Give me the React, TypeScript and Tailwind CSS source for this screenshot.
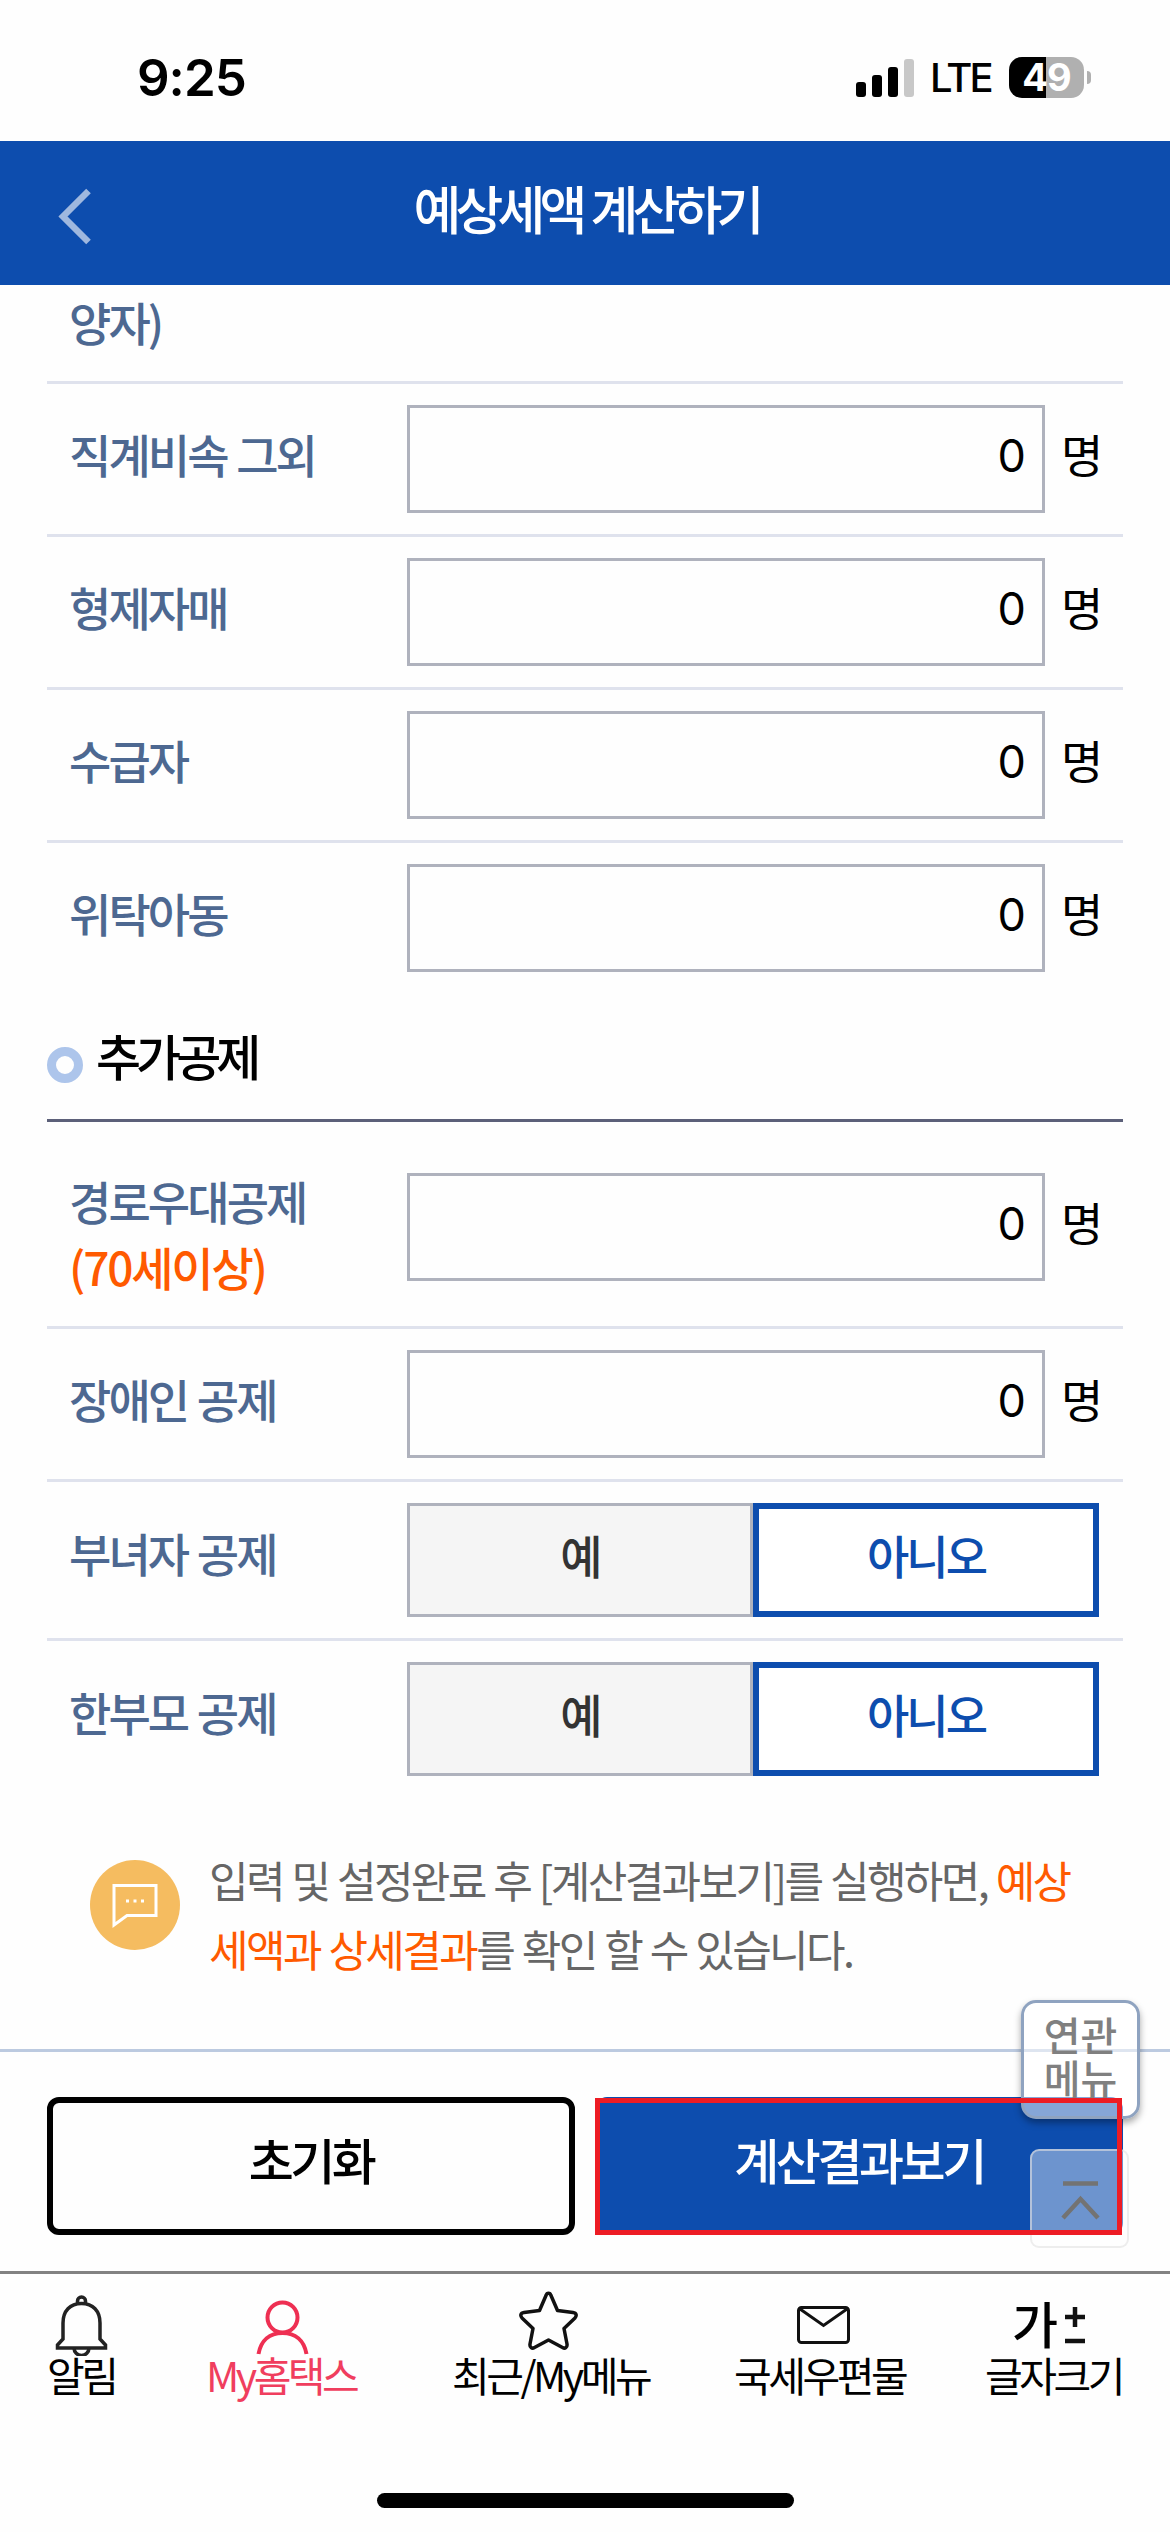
import { useState } from 'react';

interface CountField {
  label: string;
  note?: string;
}

const familyFields: CountField[] = [
  { label: '직계비속 그외' },
  { label: '형제자매' },
  { label: '수급자' },
  { label: '위탁아동' },
];

const extraFields: CountField[] = [
  { label: '경로우대공제', note: '(70세이상)' },
  { label: '장애인 공제' },
];

const choiceFields = ['부녀자 공제', '한부모 공제'];

function StatusBar() {
  return (
    <div className="h-[141px] flex items-start justify-between pl-[137px] pr-[79px] pt-[57px] text-black font-['Inter']">
      <span className="text-[51px] leading-[42px] font-semibold tracking-[-1px]">9:25</span>
      <div className="flex items-center h-[41px]">
        <svg width="58" height="38" viewBox="0 0 58 38">
          <rect x="0" y="23" width="10" height="15" rx="3" />
          <rect x="16" y="16" width="10" height="22" rx="3" />
          <rect x="32" y="8" width="10" height="30" rx="3" />
          <rect x="48" y="0" width="10" height="38" rx="3" fill="#c8c8c8" />
        </svg>
        <span className="ml-[16px] w-[63px] text-[40px] leading-[41px] font-medium tracking-[-2.700px]">LTE</span>
        <div className="ml-[16px] flex h-[41px] w-[75px] items-center justify-center rounded-[13px] bg-[linear-gradient(90deg,#000_49%,#b0b0b0_49%)] text-[38px] leading-[41px] font-bold tracking-[-1px] text-white">
          49
        </div>
        <div className="ml-[3px] h-[13px] w-[4px] rounded-r-full bg-[#b0b0b0]" />
      </div>
    </div>
  );
}

function Header() {
  return (
    <header className="relative flex h-[144px] items-center justify-center bg-[#0d4dae]">
      <button type="button" aria-label="뒤로" className="absolute left-[58px] top-[47px]">
        <svg width="34" height="57" viewBox="0 0 34 57" fill="none" stroke="#9fb8df" strokeWidth="6.500">
          <path d="M30.500 3L5 28.500L30.500 54" />
        </svg>
      </button>
      <h1 className="pb-[10px] pl-[2px] text-[52px] leading-[70px] font-medium tracking-[-5.800px] [word-spacing:3px] text-white">예상세액 계산하기</h1>
    </header>
  );
}

function Label({ field }: { field: CountField }) {
  return (
    <div className="w-[360px] pl-[22px] text-[46px] leading-[66px] font-medium tracking-[-2.900px] [word-spacing:2px] text-[#4d6891]">
      {field.label}
      {field.note && <div className="tracking-[-2.200px] text-[#ff5a00]">{field.note}</div>}
    </div>
  );
}

function CountRow({ field, last }: { field: CountField; last?: boolean }) {
  return (
    <div className={`flex items-center ${last ? '' : 'border-b-[3px] border-[#dfe2ed]'} ${field.note ? 'h-[207px] pt-[6px]' : last ? 'h-[150px]' : 'h-[153px]'}`}>
      <div className={field.note ? 'pt-[12px]' : 'pb-[12px]'}>
        <Label field={field} />
      </div>
      <div className="flex h-[108px] w-[638px] items-center justify-end border-[3px] border-[#afb2bd] pr-[16px] pb-[6px] font-['Inter',sans-serif] text-[45px] text-black">
        0
      </div>
      <span className="ml-[16px] pb-[12px] text-[46px] leading-[66px] text-black">명</span>
    </div>
  );
}

function ChoiceRow({ label, last }: { label: string; last?: boolean }) {
  const [value, setValue] = useState('no');
  const on = 'border-[6px] border-[#0d4dae] bg-white text-[#0d4dae]';
  const off = 'border-[3px] border-[#afb2bd] bg-[#f5f5f5] text-[#333]';

  return (
    <div className={`flex items-center ${last ? 'h-[156px]' : 'h-[159px] border-b-[3px] border-[#dfe2ed]'}`}>
      <div className="pb-[17px]">
        <Label field={{ label }} />
      </div>
      <button
        type="button"
        onClick={() => setValue('yes')}
        className={`h-[114px] w-[346px] pb-[11px] text-[46px] font-medium tracking-[-3px] ${value === 'yes' ? on : off}`}
      >
        예
      </button>
      <button
        type="button"
        onClick={() => setValue('no')}
        className={`h-[114px] w-[346px] pb-[11px] text-[46px] font-medium tracking-[-3px] ${value === 'no' ? on : off}`}
      >
        아니오
      </button>
    </div>
  );
}

function Notice() {
  return (
    <div className="flex h-[252px] pt-[48px] pl-[90px]">
      <div className="mt-[15px] h-[90px] w-[90px] shrink-0 rounded-full bg-[#f5bc60]">
        <svg width="90" height="90" viewBox="0 0 90 90" fill="none" stroke="#fff" strokeWidth="3">
          <path d="M24 25.500H66V55.500H37L24 65Z" />
          <path d="M36 41h3M43.500 41h3M51 41h3" />
        </svg>
      </div>
      <p className="ml-[29px] whitespace-nowrap text-[43px] leading-[69px] tracking-[-2.600px] [word-spacing:1.500px] text-[#666]">
        입력 및 설정완료 후 [계산결과보기]를 실행하면, <span className="text-[#ff5a00]">예상</span>
        <br />
        <span className="text-[#ff5a00]">세액과 상세결과</span>를 확인 할 수 있습니다.
      </p>
    </div>
  );
}

function BottomActions() {
  return (
    <div className="relative flex h-[222px] gap-[20px] border-t-[3px] border-[#bccae0] px-[47px] pt-[45px]">
      <button type="button" className="h-[138px] w-[528px] rounded-[12px] border-[6px] border-black pb-[15px] text-[49px] font-medium tracking-[-3.500px] text-black">
        초기화
      </button>
      <button type="button" className="h-[138px] w-[528px] rounded-[12px] bg-[#0d4dae] pb-[15px] text-[49px] font-medium tracking-[-3.500px] text-white">
        계산결과보기
      </button>

      {/* Floating shortcuts */}
      <button
        type="button"
        className="absolute left-[1021px] top-[-52px] h-[119px] w-[119px] rounded-[15px] border-[3px] border-[#8fa3c0] bg-white/50 pb-[8px] text-[40px] leading-[43px] font-medium text-[#808080] shadow-[0_4px_7px_rgba(0,0,0,0.35)]"
      >
        연관
        <br />
        메뉴
      </button>
      <button
        type="button"
        aria-label="맨 위로"
        className="absolute left-[1030px] top-[97px] h-[99px] w-[99px] rounded-[9px] border-2 border-[#e1e1e1]/60 bg-white/40"
      >
        <svg width="95" height="95" viewBox="0 0 95 95" fill="none" stroke="#737373" strokeWidth="4.500">
          <path d="M31 32.500H66M31 67L48.500 48L66 67" />
        </svg>
      </button>

      {/* Highlight frame */}
      <div className="pointer-events-none absolute left-[595px] top-[46px] h-[137px] w-[527px] border-[5px] border-[#ed1c24]" />
    </div>
  );
}

function TabBar() {
  return (
    <nav className="relative flex h-[261px] border-t-[3px] border-[#828282] pl-[47px] text-[41px] leading-[50px] tracking-[-3.500px] text-black">
      <div className="w-[71px] whitespace-nowrap">
        <svg className="mt-[20px] mb-[-7px] ml-[8px]" width="54" height="62" viewBox="0 0 54 62" fill="none" stroke="#222" strokeWidth="3.500">
          <path d="M22.500 9.500V7a4 4 0 0 1 8 0v2.500M8 29C8 17 15 9.500 26.500 9.500S45 17 45 29V45L50.500 51V54H2.500V51L8 45Z" />
          <path d="M19 54a7.500 7.500 0 0 0 15 0" />
        </svg>
        알림
      </div>
      <div className="ml-[88px] w-[154px] whitespace-nowrap text-[#f03e5e]">
        <svg className="mt-[20px] mb-[-7px] ml-[50px]" width="54" height="62" viewBox="0 0 54 62" fill="none" stroke="#ee2f52" strokeWidth="4">
          <circle cx="26.500" cy="23.500" r="15" />
          <path d="M2.500 60C5 46 14 39 26.500 39S48 46 50.500 60" />
        </svg>
        My홈택스
      </div>
      <div className="ml-[92px] w-[200px] whitespace-nowrap">
        <svg className="mt-[17px] mb-[-7px] ml-[67px]" width="60" height="65" viewBox="0 0 60 65" fill="none" stroke="#111" strokeWidth="3.500" strokeLinejoin="round">
          <path d="M27 4.500C28 1.500 31 1.500 32 4.500L38.500 19.500L54 21.500C57.500 22 58 24.500 56 27L45 37.500L48 53C48.500 56.500 46 58 43.500 56.500L29.500 49L15.500 56.500C13 58 10.500 56.500 11 53L14 37.500L3 27C1 24.500 1.500 22 5 21.500L20.500 19.500Z" />
        </svg>
        최근/My메뉴
      </div>
      <div className="ml-[82px] w-[175px] whitespace-nowrap">
        <svg className="mt-[20px] mb-[-7px] ml-[63px]" width="54" height="62" viewBox="0 0 54 62" fill="none" stroke="#111" strokeWidth="3">
          <rect x="1.500" y="13.500" width="50" height="35" rx="3" />
          <path d="M3 15L26.500 31.500L50 15" />
        </svg>
        국세우편물
      </div>
      <div className="ml-[76px] w-[140px] whitespace-nowrap">
        <div className="mt-[20px] mb-[-7px] ml-[27px] flex h-[62px] items-center">
          <span className="w-[53px] pb-[7px] text-[50px] leading-none font-medium tracking-normal">가</span>
          <svg width="20" height="38" viewBox="0 0 20 38" stroke="#111" strokeWidth="4.500">
            <path d="M0 11H20M10 1V21M0 35H20" />
          </svg>
        </div>
        글자크기
      </div>

      {/* Home indicator */}
      <div className="absolute left-[377px] top-[219px] h-[15px] w-[417px] rounded-full bg-black" />
    </nav>
  );
}

export default function App() {
  return (
    <div className="h-[2532px] w-[1170px] overflow-hidden bg-[#fefefe] font-['Noto_Sans_CJK_KR',sans-serif]">
      <StatusBar />
      <Header />
      <main>
        <div className="px-[47px]">
          <div className="h-[99px] border-b-[3px] border-[#dfe2ed] pt-[3px] pl-[22px] text-[46px] leading-[66px] font-medium tracking-[-2.900px] text-[#4d6891]">
            양자)
          </div>
          {familyFields.map((field, i) => (
            <CountRow key={field.label} field={field} last={i === familyFields.length - 1} />
          ))}

          {/* Extra deductions */}
          <div className="flex h-[129px] items-start gap-[13px] border-b-[3px] border-[#5c6079] pt-[27px]">
            <span className="mt-[27px] h-[36px] w-[36px] rounded-full border-[9px] border-[#adc5eb]" />
            <h2 className="text-[49px] leading-[70px] font-medium tracking-[-5px] text-black">추가공제</h2>
          </div>
          {extraFields.map((field) => (
            <CountRow key={field.label} field={field} />
          ))}
          {choiceFields.map((label, i) => (
            <ChoiceRow key={label} label={label} last={i === choiceFields.length - 1} />
          ))}
        </div>
        <Notice />
      </main>
      <BottomActions />
      <TabBar />
    </div>
  );
}
